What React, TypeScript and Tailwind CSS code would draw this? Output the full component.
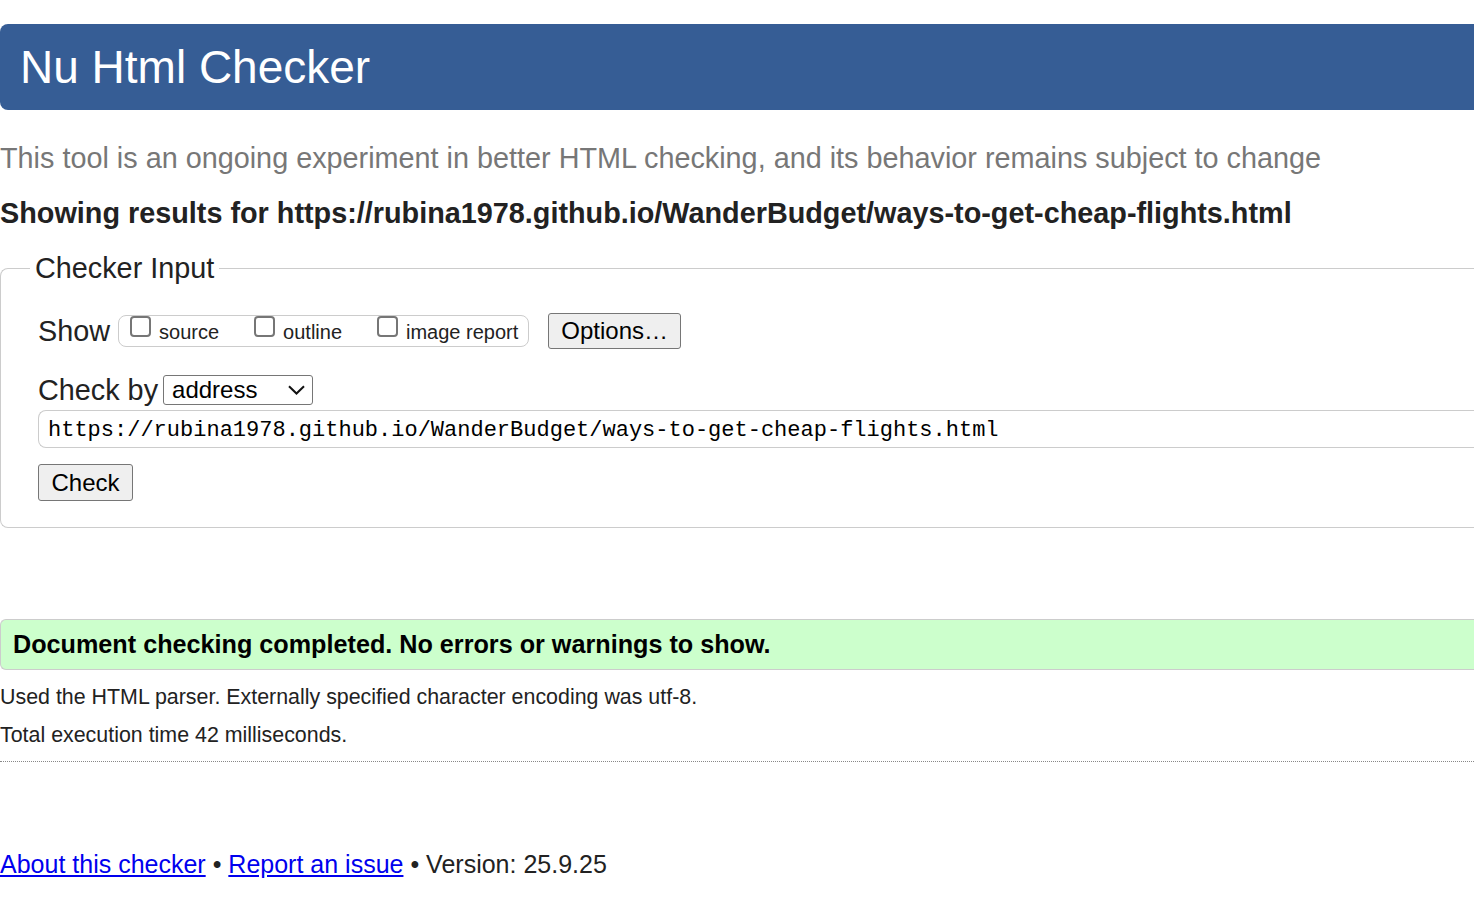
import React from 'react';

function Box({ label, first }: { label: string; first?: boolean }) {
    return (
        <div className={`flex items-start ${first ? '' : 'ml-[35px]'}`}>
            <span className="w-[21px] h-[21px] border-2 border-[#767676] rounded-[4px] bg-white" />
            <span className="ml-[8px] mt-[4px] text-[20px] leading-[24px]">{label}</span>
        </div>
    );
}

export default function App() {
    return (
        <div className="min-h-screen bg-white text-[#222] font-['Liberation_Sans',Arial,sans-serif] pt-[24px] overflow-hidden">
            <h1 className="h-[86px] bg-[#365d95] rounded-l-[8px] pl-[20px] flex items-center text-white text-[46px] font-normal">
                Nu Html Checker
            </h1>
            <p className="mt-[33px] text-[28.8px] leading-[30px] text-[#777] whitespace-nowrap">
                This tool is an ongoing experiment in better HTML checking, and its behavior remains subject to change
            </p>
            <p className="mt-[25px] text-[28.8px] leading-[30px] font-bold whitespace-nowrap">
                Showing results for https://rubina1978.github.io/WanderBudget/ways-to-get-cheap-flights.html
            </p>

            <fieldset className="mt-[24px] border border-r-0 border-[#ccc] rounded-l-[8px] pl-[37px] pb-[26px]">
                <legend className="ml-[-8px] px-[5px] text-[28.8px] leading-[32px]">Checker Input</legend>

                <div className="mt-[29px] h-[36px] flex items-center">
                    <span className="text-[28.8px] leading-[32px]">Show</span>
                    <div className="ml-[8px] h-[32px] flex items-start border border-[#ccc] rounded-[8px] pl-[11px] pr-[10px]">
                        <Box label="source" first />
                        <Box label="outline" />
                        <Box label="image report" />
                    </div>
                    <button className="ml-[19px] h-[36px] px-[12px] bg-[#efefef] border border-[#767676] rounded-[3px] text-[24px] leading-[28px] text-black">
                        Options…
                    </button>
                </div>

                <div className="mt-[26px] h-[30px] flex items-center">
                    <span className="text-[28.8px] leading-[32px]">Check by</span>
                    <div className="ml-[5px] w-[150px] h-[30px] border border-[#767676] rounded-[3px] flex items-center justify-between pl-[8px] pr-[7px] text-[24px] leading-[28px] text-black">
                        <span>address</span>
                        <svg width="17" height="10" viewBox="0 0 17 10" fill="none">
                            <path d="M1 1.2 L8.5 8.5 L16 1.2" stroke="#111" strokeWidth="2" />
                        </svg>
                    </div>
                </div>

                <div className="mt-[5px] h-[38px] border border-r-0 border-[#ccc] rounded-l-[8px] pl-[9px] pt-[3px] flex items-center font-['Liberation_Mono',monospace] text-[22px] text-black whitespace-nowrap">
                    https://rubina1978.github.io/WanderBudget/ways-to-get-cheap-flights.html
                </div>

                <button className="mt-[16px] w-[95px] h-[37px] bg-[#efefef] border border-[#767676] rounded-[3px] text-[24px] leading-[28px] text-black">
                    Check
                </button>
            </fieldset>

            <div className="mt-[91px] h-[51px] bg-[#ccffcc] border border-r-0 border-[#ccc] rounded-l-[6px] pl-[12px] flex items-center font-bold text-[25.2px] text-black whitespace-nowrap">
                Document checking completed. No errors or warnings to show.
            </div>
            <p className="mt-[15px] text-[21.4px] leading-[24px]">
                Used the HTML parser. Externally specified character encoding was utf-8.
            </p>
            <p className="mt-[14px] text-[21.4px] leading-[24px]">Total execution time 42 milliseconds.</p>
            <div className="mt-[14px] border-t border-dotted border-[#888]" />

            <p className="mt-[87px] text-[25px] leading-[30px]">
                <a href="#" className="text-[#0000ee] underline">
                    About this checker
                </a>{' '}
                •{' '}
                <a href="#" className="text-[#0000ee] underline">
                    Report an issue
                </a>{' '}
                • Version: 25.9.25
            </p>
        </div>
    );
}
